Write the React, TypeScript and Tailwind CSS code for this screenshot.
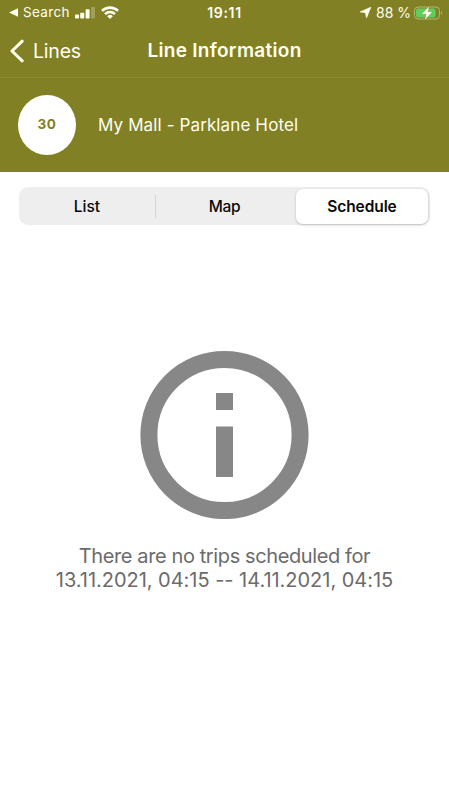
const tabs = ['List', 'Map', 'Schedule'];

function StatusBar() {
  return (
    <div className="grid h-[25px] grid-cols-3 items-center text-[14px] leading-none">
      <div className="flex h-full items-center pl-[9px]">
        <svg className="h-[9px] w-[9px]" viewBox="0 0 9 9" fill="currentColor">
          <path d="M0 4.5 9 0.3v8.4z" />
        </svg>
        <span className="ml-[5px] w-[47px] whitespace-nowrap text-[13.5px] tracking-[0.35px]">Search</span>
        <svg className="ml-[5px] h-[12px] w-[20px] shrink-0" viewBox="0 0 20 12" fill="currentColor">
          <rect x="0" y="7.5" width="4" height="4" rx="0.8" />
          <rect x="5.2" y="5.7" width="4" height="5.8" rx="0.8" />
          <rect x="10.6" y="2.2" width="4" height="9.3" rx="0.8" />
          <rect x="16" y="0" width="4" height="11.5" rx="0.8" opacity="0.25" />
        </svg>
        <svg className="ml-[6px] h-[13px] w-[18px] shrink-0" viewBox="0 0 18 13" fill="none" stroke="currentColor" strokeWidth="2.6">
          <path d="M1 4.9a11.4 11.4 0 0 1 16 0" />
          <path d="M4 8.1a7.1 7.1 0 0 1 10 0" />
          <path d="M9 13 6.2 10.2a4 4 0 0 1 5.6 0z" fill="currentColor" stroke="none" />
        </svg>
      </div>
      <span className="text-center text-[14px] font-semibold tracking-[0.7px]">19:11</span>
      <div className="flex h-full items-center justify-end pr-[7px]">
        <svg className="h-[11px] w-[11px]" viewBox="0 0 11 11" fill="currentColor">
          <path d="M11 0 6.5 11 5.3 5.7 0 4.9z" stroke="currentColor" strokeWidth="0.5" />
        </svg>
        <span className="ml-[5px] whitespace-nowrap text-[14px]">88 %</span>
        <svg className="ml-[3px] h-[16px] w-[28px]" viewBox="0 0 28 16">
          <rect x="0.5" y="2" width="25" height="12" rx="3.5" fill="none" stroke="#b5b66f" />
          <rect x="2" y="3.5" width="19.5" height="9" rx="2" fill="#5bd15c" />
          <path d="M27 6v4c1.2-.5 1.2-3.5 0-4z" fill="#b5b66f" />
          <path d="M15.3 1 7.3 9.2h4.7L10.6 15.2l8.1-8.4h-4.6z" fill="#fffff0" stroke="#75832a" strokeWidth="0.4" />
        </svg>
      </div>
    </div>
  );
}

function Header() {
  return (
    <header className="h-[172px] bg-[#818025] text-[#fffff0]">
      <StatusBar />
      <nav className="grid h-[53px] grid-cols-[1fr_auto_1fr] items-center border-b border-[#8b8a37]">
        <div className="flex items-center pl-[10px]">
          <svg className="h-[24px] w-[15px]" viewBox="0 0 15 24" fill="none" stroke="currentColor" strokeWidth="3" strokeLinecap="round" strokeLinejoin="round">
            <path d="M12.2 2.2 2 12l10.2 9.8" />
          </svg>
          <span className="ml-[8px] text-[19.5px] leading-6 tracking-[-0.2px]">Lines</span>
        </div>
        <h1 className="text-[19px] font-semibold leading-6 tracking-[0.3px]">Line Information</h1>
      </nav>
      <div className="flex h-[94px] items-center pl-[18px]">
        <div className="flex h-[60px] w-[58px] items-center justify-center rounded-[50%] bg-white text-[13.5px] font-bold tracking-[0.6px] text-[#818025]">
          <span className="-mt-[2px]">30</span>
        </div>
        <p className="ml-[22px] text-[17px] leading-6 tracking-[0.12px]">My Mall - Parklane Hotel</p>
      </div>
    </header>
  );
}

function SegmentedControl() {
  return (
    <div className="mx-[19px] mt-[15px] grid h-[38px] grid-cols-3 rounded-[9px] bg-[#eeeeef] text-[15.5px] font-medium text-[#090909]">
      {tabs.map((tab, index) => (
        <button
          key={tab}
          className={
            index === 2
              ? 'my-[2px] mr-[2px] ml-[3px] rounded-[7px] bg-white font-semibold tracking-[-0.1px] shadow-[0_1px_3px_rgba(0,0,0,0.22)]'
              : index === 0
                ? 'my-[8px] border-r border-[#d5d5d7]'
                : 'tracking-[-0.3px]'
          }
        >
          {tab}
        </button>
      ))}
    </div>
  );
}

export default function App() {
  return (
    <div className="h-[800px] w-full overflow-hidden bg-white font-['Inter',sans-serif]">
      <Header />
      <main>
        <SegmentedControl />
        <section className="mt-[125px] flex flex-col items-center">
          <svg className="h-[169px] w-[169px]" viewBox="0 0 169 169" fill="#878787">
            <circle cx="84.5" cy="85" r="75.6" fill="none" stroke="#878787" strokeWidth="17" />
            <rect x="76" y="43" width="17" height="17" />
            <rect x="76" y="76.5" width="17" height="50.5" />
          </svg>
          <p className="mt-[25px] text-center text-[20px] leading-[24px] whitespace-nowrap text-[#6b6b6b]">
            <span className="tracking-[-0.39px]">There are no trips scheduled for</span>
            <br />
            <span className="tracking-[-0.03px]">13.11.2021, 04:15 -- 14.11.2021, 04:15</span>
          </p>
        </section>
      </main>
    </div>
  );
}
